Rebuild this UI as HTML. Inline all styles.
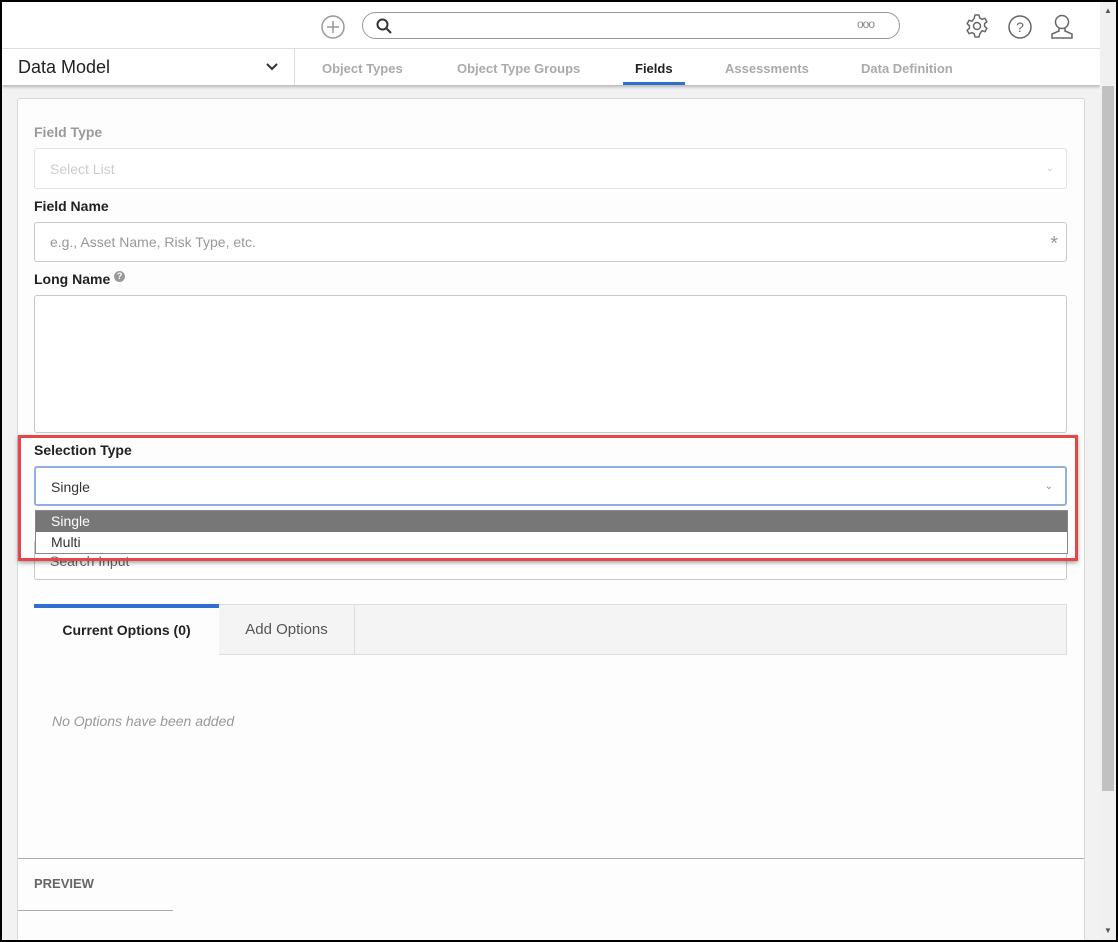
<!DOCTYPE html>
<html><head><meta charset="utf-8"><style>
*{box-sizing:border-box;margin:0;padding:0}
body{width:1118px;height:942px;overflow:hidden;font-family:"Liberation Sans",sans-serif;background:#000;position:relative}
.frame{position:absolute;left:2px;top:2px;width:1114px;height:938px;background:#f2f2f2;overflow:hidden}
.top{position:absolute;left:0;top:0;width:1098px;height:47px;background:#fff;border-bottom:1px solid #e0e0e0}
.nav{position:absolute;left:0;top:47px;width:1098px;height:36px;background:#fff;box-shadow:0 2px 3px rgba(0,0,0,.25)}
.abs{position:absolute}
.card{position:absolute;left:15px;top:96px;width:1068px;height:860px;background:#fdfdfd;border:1px solid #d8d8d8;border-radius:3px}
.lbl{position:absolute;left:16px;font-size:14px;font-weight:bold;color:#222}
.inp{position:absolute;left:16px;width:1033px;border:1px solid #c8c8c8;border-radius:3px;background:#fff;font-size:14px;color:#999;padding-left:15px}
.scroll{position:absolute;left:1098px;top:0;width:16px;height:938px;background:#f0f0f0}
</style></head><body><div class="frame">
<div class="top">
 <svg class="abs" style="left:318px;top:12px" width="26" height="26" viewBox="0 0 26 26"><circle cx="13" cy="13" r="11" fill="none" stroke="#999" stroke-width="1.5"/><path d="M13 7v12M7 13h12" stroke="#999" stroke-width="1.5"/></svg>
 <div class="abs" style="left:360px;top:10px;width:538px;height:27px;border:1.5px solid #999;border-radius:14px"></div>
 <svg class="abs" style="left:374px;top:16px" width="16" height="16" viewBox="0 0 16 16"><circle cx="6.5" cy="6.5" r="5" fill="none" stroke="#333" stroke-width="2"/><path d="M10 10l5 5" stroke="#333" stroke-width="2"/></svg>
 <div class="abs" style="left:855px;top:15px;font-size:12px;color:#888;letter-spacing:-1px">ooo</div>
 <svg class="abs" style="left:962px;top:11px" width="26" height="26" viewBox="0 0 26 26"><circle cx="13" cy="13" r="3.5" fill="none" stroke="#666" stroke-width="1.5"/><path d="M11 2h4l.7 3 2.3 1.3 2.9-1 2 3.4-2.3 2v2.6l2.3 2-2 3.4-2.9-1L15.7 21l-.7 3h-4l-.7-3-2.3-1.3-2.9 1-2-3.4 2.3-2v-2.6l-2.3-2 2-3.4 2.9 1L10.3 5z" fill="none" stroke="#666" stroke-width="1.5" stroke-linejoin="round"/></svg>
 <svg class="abs" style="left:1005px;top:12px" width="26" height="26" viewBox="0 0 26 26"><circle cx="13" cy="13" r="11" fill="none" stroke="#666" stroke-width="1.5"/><text x="13" y="18" text-anchor="middle" font-size="14" fill="#666" font-family="Liberation Sans">?</text></svg>
 <svg class="abs" style="left:1047px;top:11px" width="26" height="28" viewBox="0 0 26 28"><circle cx="13" cy="9" r="6.5" fill="none" stroke="#666" stroke-width="1.5"/><path d="M10 15v3l-7 3v4h20v-4l-7-3v-3" fill="none" stroke="#666" stroke-width="1.5"/></svg>
</div>
<div class="nav">
 <div class="abs" style="left:16px;top:8px;font-size:18px;color:#222">Data Model</div>
 <svg class="abs" style="left:264px;top:13px" width="12" height="10" viewBox="0 0 12 10"><path d="M1 2l5 5 5-5" fill="none" stroke="#333" stroke-width="2"/></svg>
 <div class="abs" style="left:292px;top:0;width:1px;height:36px;background:#ddd"></div>
 <div class="abs" style="left:320px;top:12px;font-size:13px;font-weight:bold;color:#aaa">Object Types</div>
 <div class="abs" style="left:455px;top:12px;font-size:13px;font-weight:bold;color:#aaa">Object Type Groups</div>
 <div class="abs" style="left:633px;top:12px;font-size:13px;font-weight:bold;color:#222">Fields</div>
 <div class="abs" style="left:621px;top:33px;width:62px;height:3px;background:#2f6fcf"></div>
 <div class="abs" style="left:723px;top:12px;font-size:13px;font-weight:bold;color:#aaa">Assessments</div>
 <div class="abs" style="left:859px;top:12px;font-size:13px;font-weight:bold;color:#aaa">Data Definition</div>
</div>
<div class="card">
 <div class="lbl" style="top:25px;color:#999">Field Type</div>
 <div class="inp" style="top:49px;height:41px;line-height:40px;color:#ccc;border-color:#e2e2e2">Select List<span style="position:absolute;right:12px;font-size:10px">&#8964;</span></div>
 <div class="lbl" style="top:99px">Field Name</div>
 <div class="inp" style="top:123px;height:40px;line-height:38px">e.g., Asset Name, Risk Type, etc.<span style="position:absolute;right:8px;top:2px;font-size:20px;color:#999">*</span></div>
 <div class="lbl" style="top:172px">Long Name <span style="display:inline-block;width:11px;height:11px;border-radius:50%;background:#999;color:#fff;font-size:9px;text-align:center;line-height:11px;vertical-align:top">?</span></div>
 <div class="inp" style="top:196px;height:138px"></div>
 <div class="lbl" style="top:343px">Selection Type</div>
 <div class="inp" style="top:367px;height:40px;line-height:38px;color:#333;border:2px solid #8fb0e0">Single<span style="position:absolute;right:12px;font-size:10px;color:#888">&#8964;</span></div>
 <div class="inp" style="top:441px;height:40px;line-height:40px;color:#666">Search Input</div>
 <div class="abs" style="left:16px;top:505px;width:1033px;height:51px;background:#f4f4f4;border:1px solid #ddd"></div>
 <div class="abs" style="left:16px;top:505px;width:185px;height:51px;background:#fdfdfd;border-top:4px solid #2f6fcf;font-size:14px;font-weight:bold;color:#222;text-align:center;line-height:44px">Current Options (0)</div>
 <div class="abs" style="left:201px;top:506px;width:136px;height:50px;border-right:1px solid #ddd;font-size:15px;color:#555;text-align:center;line-height:50px">Add Options</div>
 <div class="abs" style="left:34px;top:614px;font-size:14px;font-style:italic;color:#999">No Options have been added</div>
 <div class="abs" style="left:0;top:759px;width:1066px;height:1px;background:#aaa"></div>
 <div class="abs" style="left:16px;top:777px;font-size:13px;font-weight:bold;color:#666">PREVIEW</div>
 <div class="abs" style="left:0;top:811px;width:155px;height:1px;background:#aaa"></div>
</div>
<div class="abs" style="left:16px;top:433px;width:1060px;height:126px;border:3px solid #e8454a;box-shadow:0 2px 4px rgba(0,0,0,.35)"></div>
<div class="abs" style="left:33px;top:508px;width:1033px;height:44px;border:1px solid #888;background:#fff">
 <div style="height:21px;background:#777;color:#fff;font-size:14px;line-height:21px;padding-left:15px">Single</div>
 <div style="height:21px;color:#333;font-size:14px;line-height:21px;padding-left:15px">Multi</div>
</div>
<div class="scroll">
 <div class="abs" style="left:4px;top:4px;font-size:8px;color:#555">&#9650;</div>
 <div class="abs" style="left:2px;top:84px;width:12px;height:705px;background:#c1c1c1"></div>
 <div class="abs" style="left:4px;top:924px;font-size:8px;color:#555">&#9660;</div>
</div>
</div></body></html>
